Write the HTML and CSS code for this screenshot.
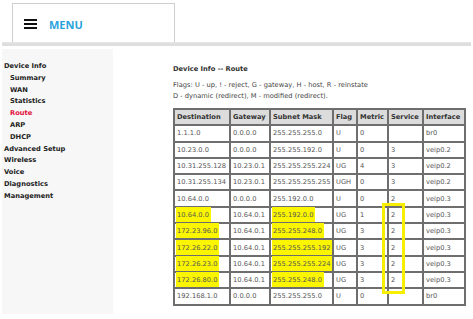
FILE: index.html
```html
<!DOCTYPE html>
<html lang="en">
<head>
  <meta charset="UTF-8">
  <title>Device Info -- Route</title>
  <link rel="stylesheet" href="styles.css">
</head>
<body>
  <header class="topbar">
    <div class="menu-box">
      <svg class="burger" width="13" height="10" viewBox="0 0 13 10">
        <rect x="0" y="0" width="13" height="2" fill="#111"/>
        <rect x="0" y="4" width="13" height="2" fill="#111"/>
        <rect x="0" y="8" width="13" height="2" fill="#111"/>
      </svg>
      <span class="menu-label">MENU</span>
    </div>
  </header>
  <div class="rule"></div>

  <div class="layout">
    <nav class="sidebar">
      <a class="nav-top">Device Info</a>
      <a class="nav-sub">Summary</a>
      <a class="nav-sub">WAN</a>
      <a class="nav-sub">Statistics</a>
      <a class="nav-sub active">Route</a>
      <a class="nav-sub">ARP</a>
      <a class="nav-sub">DHCP</a>
      <a class="nav-top">Advanced Setup</a>
      <a class="nav-top">Wireless</a>
      <a class="nav-top">Voice</a>
      <a class="nav-top">Diagnostics</a>
      <a class="nav-top">Management</a>
    </nav>

    <main class="content">
      <h1 class="title">Device Info -- Route</h1>
      <p class="flags">Flags: U - up, ! - reject, G - gateway, H - host, R - reinstate<br>D - dynamic (redirect), M - modified (redirect).</p>

      <div class="table-wrap">
        <table class="routes">
          <colgroup>
            <col style="width:56px"><col style="width:40px"><col style="width:63px"><col style="width:24px"><col style="width:31px"><col style="width:35px"><col style="width:42px">
          </colgroup>
          <tr><th>Destination</th><th>Gateway</th><th>Subnet Mask</th><th>Flag</th><th>Metric</th><th>Service</th><th>Interface</th></tr>
          <tr><td>1.1.1.0</td><td>0.0.0.0</td><td>255.255.255.0</td><td>U</td><td>0</td><td></td><td>br0</td></tr>
          <tr><td>10.23.0.0</td><td>0.0.0.0</td><td>255.255.192.0</td><td>U</td><td>0</td><td>3</td><td>veip0.2</td></tr>
          <tr><td>10.31.255.128</td><td>10.23.0.1</td><td>255.255.255.224</td><td>UG</td><td>4</td><td>3</td><td>veip0.2</td></tr>
          <tr><td>10.31.255.134</td><td>10.23.0.1</td><td>255.255.255.255</td><td>UGH</td><td>0</td><td>3</td><td>veip0.2</td></tr>
          <tr><td>10.64.0.0</td><td>0.0.0.0</td><td>255.192.0.0</td><td>U</td><td>0</td><td>2</td><td>veip0.3</td></tr>
          <tr><td><span class="mark">10.64.0.0</span></td><td>10.64.0.1</td><td><span class="mark">255.192.0.0</span></td><td>UG</td><td>1</td><td>2</td><td>veip0.3</td></tr>
          <tr><td><span class="mark">172.23.96.0</span></td><td>10.64.0.1</td><td><span class="mark">255.255.248.0</span></td><td>UG</td><td>3</td><td>2</td><td>veip0.3</td></tr>
          <tr><td><span class="mark">172.26.22.0</span></td><td>10.64.0.1</td><td><span class="mark">255.255.255.192</span></td><td>UG</td><td>3</td><td>2</td><td>veip0.3</td></tr>
          <tr><td><span class="mark">172.26.23.0</span></td><td>10.64.0.1</td><td><span class="mark">255.255.255.224</span></td><td>UG</td><td>3</td><td>2</td><td>veip0.3</td></tr>
          <tr><td><span class="mark">172.26.80.0</span></td><td>10.64.0.1</td><td><span class="mark">255.255.248.0</span></td><td>UG</td><td>3</td><td>2</td><td>veip0.3</td></tr>
          <tr><td>192.168.1.0</td><td>0.0.0.0</td><td>255.255.255.0</td><td>U</td><td>0</td><td></td><td>br0</td></tr>
        </table>
        <div class="service-box"></div>
      </div>
    </main>
  </div>
</body>
</html>
```

FILE: styles.css
```css
body {
  margin: 0;
  background: #fff;
  font-family: "DejaVu Sans", Verdana, sans-serif;
  color: #333;
}

.topbar {
  padding: 3px 0 0 12px;
}

.menu-box {
  width: 161px;
  height: 37px;
  border: 1px solid #cfcfcf;
  border-bottom: none;
  background: #fff;
  display: flex;
  align-items: center;
  padding-top: 1px;
}

.burger {
  margin-left: 11px;
  margin-right: 12px;
}

.menu-label {
  font-family: "Open Sans", sans-serif;
  font-weight: bold;
  font-size: 11px;
  color: #2ba3dd;
  margin-top: 2px;
}

.rule {
  height: 4px;
  margin: 0 2px;
  width: 469px;
  background: #dedede;
  border-top: 1px solid #e6e6e6;
  box-sizing: border-box;
}

.layout {
  display: flex;
  margin-top: 3px;
}

.sidebar {
  width: 111px;
  height: 265px;
  margin-left: 2px;
  background: #f7f7f7;
  padding: 12px 0 0 2px;
  box-sizing: border-box;
  display: flex;
  flex-direction: column;
}

.sidebar a {
  font-weight: bold;
  font-size: 6.7px;
  line-height: 11.8px;
  color: #222;
}

.sidebar .nav-sub {
  padding-left: 6px;
}

.sidebar .active {
  color: #e3103b;
}

.content {
  padding: 15px 0 0 60px;
}

.title {
  margin: 0;
  font-size: 6.7px;
  line-height: 11px;
  font-weight: bold;
  color: #333;
}

.flags {
  margin: 5px 0 0;
  font-size: 6.7px;
  line-height: 11px;
  color: #444;
}

.table-wrap {
  position: relative;
  margin-top: 6px;
}

.routes {
  border-collapse: collapse;
  table-layout: fixed;
  width: 291px;
  border: 2px solid #555;
}

.routes th,
.routes td {
  border: 2px solid #6e6e6e;
  height: 14.3px;
  padding: 0 2px;
  text-align: left;
  white-space: nowrap;
  font-size: 6.7px;
  overflow: visible;
}

.routes th {
  background: #dcdcdc;
  color: #333;
  font-weight: bold;
}

.routes td {
  background: #fff;
  color: #555;
}

.mark {
  background: #fbf500;
  padding: 4px 2px 3px 1px;
  margin-left: -1px;
}

.service-box {
  position: absolute;
  left: 209px;
  top: 95px;
  width: 23px;
  height: 91px;
  border: 3px solid #f7ee00;
  box-sizing: border-box;
}
```
